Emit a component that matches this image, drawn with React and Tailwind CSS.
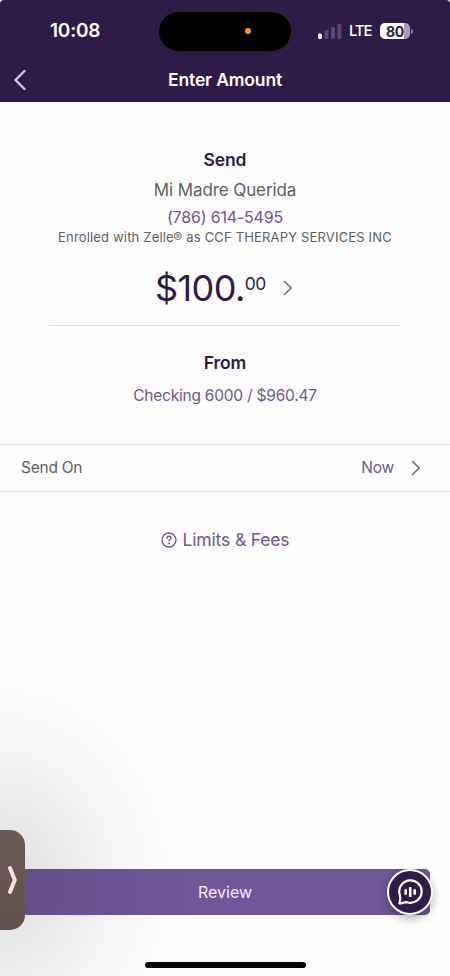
import React from "react";

const SIGNAL_BARS = [
  { x: 0, y: 9.5, height: 5.5, active: true },
  { x: 6.5, y: 6, height: 9, active: false },
  { x: 13, y: 3, height: 12, active: false },
  { x: 19.5, y: 0, height: 15, active: false },
];

const StatusBar = () => (
  <div className="flex h-[62px] items-center text-white">
    <div className="w-[159px] pl-[50px] text-[19px] font-semibold leading-6 tracking-[-0.2px]">
      10:08
    </div>
    {/* Dynamic island with the mic indicator */}
    <div className="flex h-[39px] w-[132px] items-center rounded-full bg-black pl-[86px]">
      <span className="size-1.5 rounded-full bg-[#f7941f]" />
    </div>
    <div className="flex flex-1 items-center pl-[27px]">
      <svg width="24" height="15" viewBox="0 0 24 15">
        {SIGNAL_BARS.map((bar) => (
          <rect
            key={bar.x}
            x={bar.x}
            y={bar.y}
            width="4"
            height={bar.height}
            rx="1.2"
            fill={bar.active ? "#fff" : "#584871"}
          />
        ))}
      </svg>
      <span className="ml-[7px] w-[24px] text-[15px] font-medium tracking-[-1.2px]">LTE</span>
      <div className="ml-[7px] flex h-4 w-[30px] items-center justify-center rounded-[5px] bg-[linear-gradient(90deg,#fff_80%,#a79db5_80%)] text-[14px] font-bold tracking-[-0.3px] text-[#2f1b47]">
        80
      </div>
      <span className="ml-px h-[5px] w-[2px] rounded-r-full bg-[#8a7f9c]" />
    </div>
  </div>
);

const Header = () => (
  <header className="h-[102px] rounded-t-[4px] bg-[#2f1b47]">
    <StatusBar />
    <div className="flex h-[35px] items-center">
      <svg className="ml-[13px]" width="14" height="22" viewBox="0 0 14 22" fill="none">
        <path
          d="M11.5 2 2.5 11l9 9"
          stroke="#cfc4f5"
          strokeWidth="2.3"
          strokeLinecap="round"
          strokeLinejoin="round"
        />
      </svg>
      <h1 className="flex-1 pr-[27px] text-center text-[17.5px] font-semibold leading-6 tracking-[-0.15px] text-white">
        Enter Amount
      </h1>
    </div>
  </header>
);

const ChevronRight = ({ className }) => (
  <svg className={className} width="10" height="16" viewBox="0 0 10 16" fill="none">
    <path d="m1.5 1.5 6.7 6.5-6.7 6.5" stroke="currentColor" strokeWidth="1.5" strokeLinecap="round" />
  </svg>
);

const App = () => {
  return (
    <div className="bg-white">
      <div className="relative flex h-[976px] w-[450px] flex-col overflow-hidden bg-[#fefefe] font-['Inter','Liberation_Sans',sans-serif]">
        <Header />

        {/* Recipient and amount */}
        <section className="flex flex-col items-center whitespace-nowrap pt-[46px] text-center">
          <h2 className="text-[17.5px] font-semibold leading-6 tracking-[-0.15px] text-[#2f1b47]">Send</h2>
          <p className="mt-1.5 text-[17px] leading-6 tracking-[-0.1px] text-[#5f5f63]">Mi Madre Querida</p>
          <p className="mt-[5px] text-[16px] leading-5 tracking-[-0.18px] text-[#71568f]">(786) 614-5495</p>
          <p className="mt-0.5 text-[13px] leading-4 tracking-[0.17px] text-[#5f5f63]">
            Enrolled with Zelle® as CCF THERAPY SERVICES INC
          </p>
          <div className="mt-[19px] flex h-12 items-center pr-[2px] text-[#2f1b47]">
            <span className="text-[36px] leading-[48px] tracking-[-0.6px]">$100.</span>
            <span className="mb-2 text-[17.5px] leading-6 tracking-[-0.4px]">00</span>
            <ChevronRight className="ml-[17px] text-[#71568f]" />
          </div>
          <div className="mt-[13px] h-px w-[352px] bg-[#d9d9db]" />
          <h2 className="mt-[25px] text-[17.5px] font-semibold leading-6 tracking-[-0.15px] text-[#2f1b47]">From</h2>
          <p className="mt-[9px] text-[15.5px] leading-6 tracking-[-0.22px] text-[#71568f]">Checking 6000 / $960.47</p>
        </section>

        {/* Schedule row */}
        <div className="mt-9 flex h-12 items-center border-y border-[#e8e8ea] pl-[21px] pr-[29px] text-[15.5px] tracking-[-0.25px]">
          <span className="text-[#5f5f63]">Send On</span>
          <span className="ml-auto text-[#71568f]">Now</span>
          <ChevronRight className="ml-[17px] text-[#71568f]" />
        </div>

        <div className="mt-9 flex h-6 items-center justify-center text-[17.5px] tracking-[-0.15px] text-[#71568f]">
          <svg className="mr-[6px]" width="16" height="16" viewBox="0 0 16 16" fill="none" stroke="currentColor">
            <circle cx="8" cy="8" r="7" strokeWidth="1.3" />
            <path d="M6 6.3C6 5 6.9 4.3 8 4.3s2 .8 2 1.8c0 1.3-1.9 1.5-1.9 3" strokeWidth="1.4" strokeLinecap="round" />
            <circle cx="8.1" cy="11.3" r=".9" fill="currentColor" stroke="none" />
          </svg>
          <span>Limits &amp; Fees</span>
        </div>

        <div className="mb-[47px] ml-[22px] mr-5 mt-auto flex h-[46px] items-center justify-center rounded-[5px] bg-[#715699] text-[16px] text-[#f4ecfb]">
          <span className="pr-0.5">Review</span>
        </div>
        <div className="mb-2 ml-[145px] h-1.5 w-[161px] rounded-full bg-black" />

        {/* Shade cast by the side drawer */}
        <div className="pointer-events-none absolute bottom-0 left-0 h-[340px] w-[230px] bg-[radial-gradient(ellipse_200px_230px_at_0px_245px,rgba(0,0,0,0.13),rgba(0,0,0,0.075)_33%,rgba(0,0,0,0.03)_62%,rgba(0,0,0,0.01)_80%,transparent)]" />

        {/* Side drawer handle */}
        <div className="absolute left-0 top-[830px] flex h-[100px] w-[25px] items-center rounded-r-[15px] bg-linear-to-b from-[#6b5953] to-[#62504f]">
          <svg className="ml-[7px]" width="11" height="30" viewBox="0 0 11 30" fill="none">
            <path d="m3 3 4.8 12L3 27" stroke="#f8e4e4" strokeWidth="4" strokeLinecap="round" strokeLinejoin="round" />
          </svg>
        </div>

        {/* Assistant button */}
        <div className="absolute left-[387px] top-[869px] flex size-[46px] items-center justify-center rounded-full border-2 border-white bg-[#2f1b47] shadow-[0_4px_10px_rgba(0,0,0,0.3)]">
          <svg width="28" height="28" viewBox="0 0 28 28" fill="none" stroke="#fff" strokeLinejoin="round">
            <path d="M3.8 17A11.2 11.2 0 1 1 11 24.2c-2.2-.1-4.6.9-7.6 1.3 .9-2.7 1.3-5.7.4-8.5Z" strokeWidth="2.2" />
            <path d="M9.7 11.3v5.4M14.2 9v10M18.7 11.3v5.4" strokeWidth="2.6" />
          </svg>
        </div>
      </div>
    </div>
  );
};

export default App;
